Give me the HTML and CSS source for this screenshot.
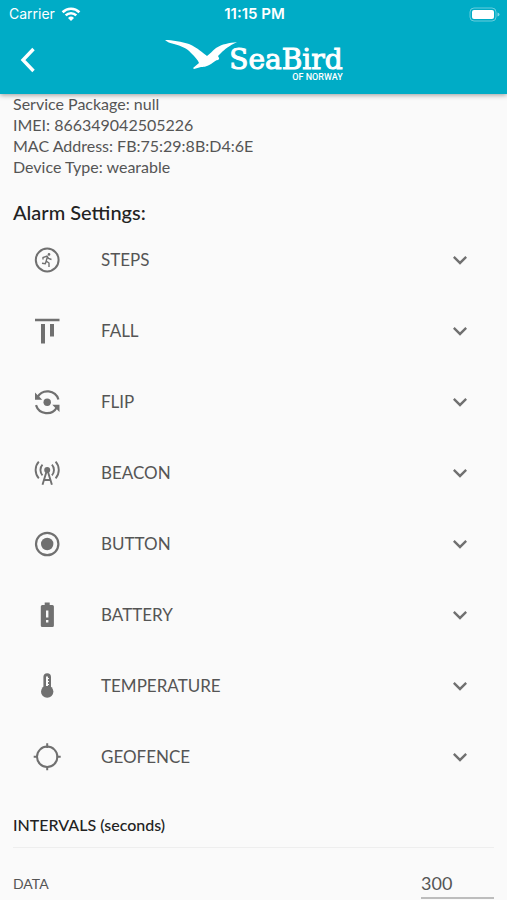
FILE: index.html
```html
<!DOCTYPE html>
<html lang="en">
<head>
<meta charset="utf-8">
<meta name="viewport" content="width=device-width, initial-scale=1">
<title>SeaBird of Norway</title>
<link rel="stylesheet" href="styles.css">
</head>
<body>
<header class="header">
  <div class="status">
    <div class="carrier">
      <span>Carrier</span>
      <svg width="20" height="14" viewBox="0 0 20 14" fill="none" stroke="#fff" stroke-width="2.6"><path d="M1.6 5.2a12 12 0 0 1 16.8 0M4.7 8.4a7.6 7.6 0 0 1 10.6 0"/><path d="M10 14 7 10.9a4.3 4.3 0 0 1 6 0z" fill="#fff" stroke="none"/></svg>
    </div>
    <span class="time">11:15 PM</span>
    <svg class="battery" width="31" height="15" viewBox="0 0 31 15"><rect x="1" y="1" width="26" height="13" rx="4" fill="none" stroke="#fff" stroke-opacity=".4"/><rect x="3" y="3" width="22" height="9" rx="2" fill="#fff"/><path d="M28.500 5.500v4q2-.5 2-2t-2-2" fill="#fff" fill-opacity=".5"/></svg>
  </div>
  <div class="bar">
    <button class="back" aria-label="Back"><svg width="16" height="26" viewBox="0 0 16 26" fill="none" stroke="#fff" stroke-width="3.400"><path d="M13.500 2 3 13l10.500 11"/></svg></button>
    <div class="brand">
      <svg class="bird" width="73" height="32" viewBox="0 0 73 32" fill="#fff"><path d="M1 1C8 1 18 3 25 5C34 9 39 14 43 17C46 15 48 12 52 9C58 5 65 4 73 3C65 7 61 10 57 14L54 17C55 19 56 20 54 21C52 21 50 23 47 25C42 28 39 28 37 28L30 30L29 29L35 24C34 21 31 18 27 14C23 9 17 7 10 5C6 4 3 3 1 1z"/></svg>
      <div class="wordmark"><span class="name">SeaBird</span><span class="sub">OF NORWAY</span></div>
    </div>
  </div>
</header>
<main class="content">
  <div class="info">
    <div>Service Package: null</div>
    <div>IMEI: 866349042505226</div>
    <div>MAC Address: FB:75:29:8B:D4:6E</div>
    <div>Device Type: wearable</div>
  </div>
  <h2 class="title">Alarm Settings:</h2>
  <div class="alarms">
    <button class="row" aria-expanded="false">
      <svg class="icon" viewBox="0 0 28 28" fill="none" stroke="currentColor"><circle cx="14.200" cy="14" r="11.400" stroke-width="2"/><circle cx="16" cy="8.400" r="1.300" fill="currentColor" stroke="none"/><path d="M10 13.500v-2l4-1.300 1.500 2.300 3 1M14.500 10.500l-1.300 4.500 2.800 2v4M13.300 14.800l-1 3-3.300-.6" stroke-width="1.400"/></svg>
      <span class="label">STEPS</span>
      <svg class="chevron" viewBox="0 0 24 24"><path d="M16.590 8.590 12 13.170 7.410 8.590 6 10l6 6 6-6z"/></svg>
    </button>
    <button class="row" aria-expanded="false">
      <svg class="icon" viewBox="0 0 28 28" fill="currentColor"><path d="M2 1.800h24.500v2.400H2zM8 7h4v19.500H8zM17 7h4v12.500h-4z"/></svg>
      <span class="label">FALL</span>
      <svg class="chevron" viewBox="0 0 24 24"><path d="M16.590 8.590 12 13.170 7.410 8.590 6 10l6 6 6-6z"/></svg>
    </button>
    <button class="row" aria-expanded="false">
      <svg class="icon" viewBox="0 0 28 28" fill="none" stroke="currentColor" stroke-width="2.200"><circle cx="14.200" cy="14.200" r="3.700" fill="currentColor" stroke="none"/><path d="M25.400 11.500A11.400 11.400 0 0 0 4.500 9.300M3 17.200a11.400 11.400 0 0 0 20.900 2"/><path d="M2 4.500v7.200h7.200L6.800 9.300 4.500 7z" fill="currentColor" stroke="none"/><path d="M26.500 24v-7.200h-7.200l2.400 2.400 2.300 2.300z" fill="currentColor" stroke="none"/></svg>
      <span class="label">FLIP</span>
      <svg class="chevron" viewBox="0 0 24 24"><path d="M16.590 8.590 12 13.170 7.410 8.590 6 10l6 6 6-6z"/></svg>
    </button>
    <button class="row" aria-expanded="false">
      <svg class="icon" viewBox="0 0 28 28" fill="none" stroke="currentColor" stroke-width="1.900"><circle cx="14.200" cy="11" r="3" fill="currentColor" stroke="none"/><path d="M13.700 12 9.500 25.800M14.700 12l4.200 13.800M11 21h6.400"/><path d="M9.500 5.700a7.800 7.800 0 0 0 0 10.600M18.900 5.700a7.800 7.800 0 0 1 0 10.600M5.800 2.700a12.400 12.400 0 0 0 0 16.600M22.600 2.700a12.400 12.400 0 0 1 0 16.600"/></svg>
      <span class="label">BEACON</span>
      <svg class="chevron" viewBox="0 0 24 24"><path d="M16.590 8.590 12 13.170 7.410 8.590 6 10l6 6 6-6z"/></svg>
    </button>
    <button class="row" aria-expanded="false">
      <svg class="icon" viewBox="0 0 28 28" fill="none" stroke="currentColor" stroke-width="2.200"><circle cx="14.200" cy="14" r="11.200"/><circle cx="14.200" cy="14" r="6.200" fill="currentColor" stroke="none"/></svg>
      <span class="label">BUTTON</span>
      <svg class="chevron" viewBox="0 0 24 24"><path d="M16.590 8.590 12 13.170 7.410 8.590 6 10l6 6 6-6z"/></svg>
    </button>
    <button class="row" aria-expanded="false">
      <svg class="icon" viewBox="0 0 28 28" fill="currentColor" fill-rule="evenodd"><path d="M11.700 1.600h5v2.300h2.700q1.500 0 1.500 1.500v19q0 1.500-1.500 1.500H9.300q-1.500 0-1.500-1.500v-19q0-1.500 1.500-1.500h2.400zM13 9.600v7h2.400v-7zM13 18.900v2.500h2.400v-2.500z"/></svg>
      <span class="label">BATTERY</span>
      <svg class="chevron" viewBox="0 0 24 24"><path d="M16.590 8.590 12 13.170 7.410 8.590 6 10l6 6 6-6z"/></svg>
    </button>
    <button class="row" aria-expanded="false">
      <svg class="icon" viewBox="0 0 28 28" fill="currentColor"><circle cx="14.200" cy="19.600" r="6.200"/><path d="M10.400 16V5a3.800 3.800 0 0 1 7.600 0v11z"/><path d="M14 4.500v9.500" fill="none" stroke="#fafafa" stroke-width="2"/><path d="M14 6.500h2M14 9.500h2M14 12.500h2" stroke="#fafafa"/></svg>
      <span class="label">TEMPERATURE</span>
      <svg class="chevron" viewBox="0 0 24 24"><path d="M16.590 8.590 12 13.170 7.410 8.590 6 10l6 6 6-6z"/></svg>
    </button>
    <button class="row" aria-expanded="false">
      <svg class="icon" viewBox="0 0 28 28" fill="none" stroke="currentColor" stroke-width="2"><circle cx="14.200" cy="13.800" r="10.200"/><path d="M14.200.3V5M14.200 23v4.300M.7 13.800H5M23.400 13.800h4.300"/></svg>
      <span class="label">GEOFENCE</span>
      <svg class="chevron" viewBox="0 0 24 24"><path d="M16.590 8.590 12 13.170 7.410 8.590 6 10l6 6 6-6z"/></svg>
    </button>
  </div>
  <h3 class="intervals">INTERVALS (seconds)</h3>
  <div class="field">
    <label for="data">DATA</label>
    <input id="data" type="text" inputmode="numeric" value="300">
  </div>
</main>
</body>
</html>
```
FILE: styles.css
```css
* {
  box-sizing: border-box;
}

body {
  margin: 0;
  background: #fafafa;
  color: #555;
  font-family: Lato, "Liberation Sans", sans-serif;
}

button,
input {
  font: inherit;
  color: inherit;
  background: none;
  border: 0;
  border-radius: 0;
  padding: 0;
}

.header {
  position: relative;
  background: #00acc6;
  color: #fff;
  box-shadow: 0 1px 5px rgba(0, 0, 0, 0.4);
}

.status {
  display: grid;
  grid-template-columns: 1fr auto 1fr;
  align-items: center;
  height: 28px;
  padding: 0 7px 0 9px;
  font: 14px/28px Inter, sans-serif;
}

.carrier {
  display: flex;
  align-items: center;
  gap: 6px;
}

.time {
  font-size: 15px;
  font-weight: 600;
}

.battery {
  justify-self: end;
}

.bar {
  display: grid;
  grid-template-columns: 1fr auto 1fr;
  height: 66px;
  padding: 0 20px;
}

.back {
  justify-self: start;
  align-self: center;
  display: flex;
  margin-bottom: 3px;
}

.brand {
  display: flex;
  align-items: flex-start;
  padding-top: 11px;
}

.bird {
  margin-right: -8px;
}

.wordmark {
  display: flex;
  flex-direction: column;
  align-items: flex-end;
  padding-top: 8px;
}

.name {
  font: 28px/26px "DejaVu Serif", serif;
  -webkit-text-stroke: 1px #fff;
}

.sub {
  font: 500 9px/8px Roboto, sans-serif;
}

.content {
  padding: 0 13px;
}

.info {
  margin-top: -1px;
  font-size: 16px;
  line-height: 21px;
}

.title {
  margin: 23px 0 0;
  font-size: 20px;
  line-height: 24px;
  font-weight: 500;
  color: #222;
}

.row {
  display: flex;
  align-items: center;
  width: 100%;
  height: 71px;
  padding: 0 20px;
  text-align: left;
  font-size: 17px;
}

.icon {
  width: 28px;
  height: 28px;
  margin-right: 40px;
  color: #707070;
}

.label {
  flex: 1;
}

.chevron {
  width: 28px;
  height: 28px;
  fill: #707070;
}

.intervals {
  margin: 0;
  padding: 23px 0 12px;
  border-bottom: 1px solid #eee;
  font-size: 16px;
  line-height: 20px;
  font-weight: 500;
  color: #222;
}

.field {
  display: flex;
  align-items: center;
  justify-content: space-between;
  padding-top: 20px;
  font-size: 14px;
}

.field input {
  width: 73px;
  height: 31px;
  border-bottom: 2px solid #bdbdbd;
  font-size: 18px;
}
```
